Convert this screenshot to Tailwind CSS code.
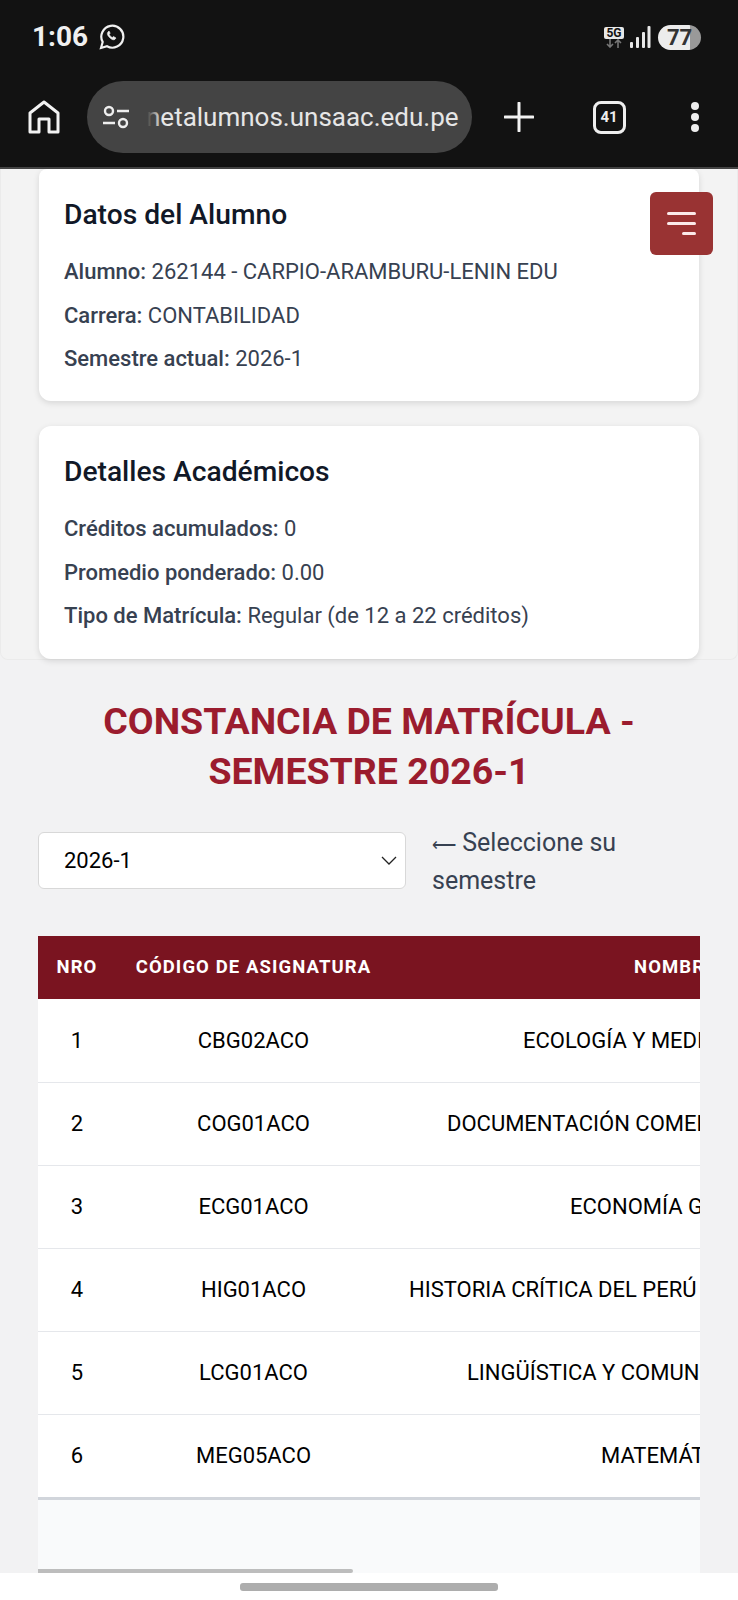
<!DOCTYPE html>
<html lang="es">
<head>
<meta charset="utf-8">
<script src="https://cdn.jsdelivr.net/npm/@tailwindcss/browser@4"></script>
</head>
<body class="font-['Roboto',sans-serif]">
<div class="w-[738px] h-[1600px] overflow-hidden flex flex-col bg-[#f2f2f3]">
  <!-- system + browser chrome -->
  <header class="h-[169px] shrink-0 bg-[#121212] text-white flex flex-col">
    <div class="h-[74px] pt-[20px] px-[32px] flex items-start justify-between">
      <div class="flex items-center gap-[11px] h-[34px]">
        <span class="text-[28px] font-bold text-[#f0f0f0]">1:06</span>
        <svg width="26" height="26" viewBox="0 0 26 26" fill="none" stroke="#f0f0f0" stroke-width="2.2"><path d="M2 24l1.7-6A11 11 0 1 1 8 22.3z"/><path d="M9 8c-1 1-1 3 1.5 5.500s4.500 2.800 5.500 1.800l1-1.300-2.600-1.600-1 1c-1 0-3-2-3.200-3.200l1-1L10 7z" fill="#f0f0f0" stroke-width="0.600"/></svg>
      </div>
      <div class="flex items-center gap-[5px] h-[34px] pr-[5px]">
        <div class="flex flex-col items-center">
          <span class="bg-[#e8e8e8] text-[#121212] rounded-[2px] text-[12px] font-bold leading-[12px] px-[2px]">5G</span>
          <svg width="20" height="9" viewBox="0 0 20 9" fill="none" stroke="#777" stroke-width="1.600"><path d="M6 0v8M3 5l3 3 3-3M14 9V1M11 4l3-3 3 3"/></svg>
        </div>
        <svg width="22" height="23" viewBox="0 0 22 23" fill="#e8e8e8"><rect x="1" y="16" width="3" height="6" rx="1"/><rect x="7" y="11" width="3" height="11" rx="1"/><rect x="13" y="6" width="3" height="16" rx="1"/><rect x="18.500" y="0" width="3" height="22" rx="1"/></svg>
        <div class="w-[43px] h-[25px] rounded-full overflow-hidden flex items-center justify-center bg-[linear-gradient(90deg,#ececec_0%,#ececec_75%,#999_75%,#999_100%)] text-[#333] text-[22px] font-bold ml-[2px]">77</div>
      </div>
    </div>
    <div class="flex items-center h-[72px] mt-[7px]">
      <div class="w-[87px] flex justify-center">
        <svg width="32" height="34" viewBox="0 0 32 34" fill="none" stroke="#f2f2f2" stroke-width="3" stroke-linejoin="round"><path d="M2 32V13L16 2l14 11v19H21V19H11v13z"/></svg>
      </div>
      <div class="relative w-[385px] h-[72px] rounded-full bg-[#444] flex items-center overflow-hidden pl-[15px]">
        <svg width="28" height="24" viewBox="0 0 28 24" fill="none" stroke="#eee" stroke-width="2.400"><circle cx="7" cy="6" r="4"/><path d="M15 6h12M1 18h12"/><circle cx="21" cy="18" r="4"/></svg>
        <span class="ml-[16px] text-[26px] text-[#e6e6e6] whitespace-nowrap">netalumnos.unsaac.edu.pe</span>
        <div class="absolute left-[58px] top-0 w-[16px] h-full bg-[linear-gradient(90deg,#444_15%,rgba(68,68,68,0)_100%)]"></div>
      </div>
      <div class="w-[94px] flex justify-center">
        <svg width="30" height="30" viewBox="0 0 30 30" stroke="#f2f2f2" stroke-width="3" stroke-linecap="round"><path d="M15 1v28M1 15h28"/></svg>
      </div>
      <div class="w-[86px] flex justify-center">
        <div class="w-[33px] h-[33px] rounded-[8px] border-[3px] border-[#eee] flex items-center justify-center text-[15px] font-bold text-[#eee]">41</div>
      </div>
      <div class="flex-1 flex flex-col items-center gap-[3px]">
        <span class="w-[8px] h-[8px] rounded-full bg-[#eee]"></span>
        <span class="w-[8px] h-[8px] rounded-full bg-[#eee]"></span>
        <span class="w-[8px] h-[8px] rounded-full bg-[#eee]"></span>
      </div>
    </div>
    <div class="mt-auto h-[2px] bg-[#444]"></div>
  </header>

  <main class="relative flex-1 min-h-0 flex flex-col">
    <button class="absolute left-[650px] top-[23px] w-[63px] h-[63px] rounded-[6px] bg-[#993333] flex flex-col items-end justify-center gap-[7px] pr-[17px]">
      <span class="w-[29px] h-[3px] rounded-full bg-[#fbeaea]"></span>
      <span class="w-[29px] h-[3px] rounded-full bg-[#fbeaea]"></span>
      <span class="w-[14px] h-[3px] rounded-full bg-[#fbeaea]"></span>
    </button>

    <section class="h-[491px] shrink-0 border border-t-0 border-[#ebebeb] rounded-b-[8px] px-[38px] flex flex-col gap-[25px] bg-[#f3f3f3]">
      <div class="h-[232px] bg-white rounded-b-[12px] rounded-t-[8px] shadow-[0_2px_6px_rgba(0,0,0,0.12)] px-[25px] pt-[29px] text-[22px] text-[#374151]">
        <h2 class="text-[28.2px] leading-[34px] font-medium text-[#111827] mb-[18px]">Datos del Alumno</h2>
        <p class="leading-[43.5px]"><b class="font-medium">Alumno:</b> 262144 - CARPIO-ARAMBURU-LENIN EDU</p>
        <p class="leading-[43.5px]"><b class="font-medium">Carrera:</b> CONTABILIDAD</p>
        <p class="leading-[43.5px]"><b class="font-medium">Semestre actual:</b> 2026-1</p>
      </div>
      <div class="h-[233px] bg-white rounded-[12px] shadow-[0_2px_6px_rgba(0,0,0,0.12)] px-[25px] pt-[29px] text-[22px] text-[#374151]">
        <h2 class="text-[28.2px] leading-[34px] font-medium text-[#111827] mb-[18px]">Detalles Académicos</h2>
        <p class="leading-[43.5px]"><b class="font-medium">Créditos acumulados:</b> 0</p>
        <p class="leading-[43.5px]"><b class="font-medium">Promedio ponderado:</b> 0.00</p>
        <p class="leading-[43.5px]"><b class="font-medium">Tipo de Matrícula:</b> Regular (de 12 a 22 créditos)</p>
      </div>
    </section>

    <h1 class="mt-[36px] text-center text-[37.5px] leading-[50px] font-bold text-[#9b1c2e]">CONSTANCIA DE MATRÍCULA -<br>SEMESTRE 2026-1</h1>

    <div class="mt-[36px] flex pl-[38px] gap-[26px]">
      <div class="w-[368px] h-[57px] bg-white border border-[#d8d8d8] rounded-[6px] flex items-center justify-between pl-[25px] pr-[8px] text-[22px] text-black">
        <span>2026-1</span>
        <svg width="16" height="10" viewBox="0 0 16 10" fill="none" stroke="#222" stroke-width="1.300"><path d="M1 1l7 7 7-7"/></svg>
      </div>
      <p class="w-[250px] text-[25px] leading-[36px] text-[#374151] -mt-[7px]"><span class="text-[17px]">⟵</span> Seleccione su semestre</p>
    </div>

    <div class="ml-[38px] w-[662px] mt-[37px] flex-1 min-h-0 bg-[#f9fafb] overflow-hidden flex flex-col">
      <table class="w-[1391px] table-fixed border-collapse text-[22px] text-black bg-white">
        <colgroup><col class="w-[78px]"><col class="w-[275px]"><col></colgroup>
        <thead>
          <tr class="h-[63px] bg-[#7a1420] text-white text-[18.5px] font-bold tracking-[1.1px]">
            <th class="text-center font-bold">NRO</th>
            <th class="text-center font-bold">CÓDIGO DE ASIGNATURA</th>
            <th class="text-left font-bold pl-[243px]">NOMBRE DE ASIGNATURA</th>
          </tr>
        </thead>
        <tbody>
          <tr class="h-[83px] border-b border-[#e5e7eb]"><td class="text-center">1</td><td class="text-center">CBG02ACO</td><td class="pl-[132px] whitespace-nowrap">ECOLOGÍA Y MEDIO AMBIENTE</td></tr>
          <tr class="h-[83px] border-b border-[#e5e7eb]"><td class="text-center">2</td><td class="text-center">COG01ACO</td><td class="pl-[56px] whitespace-nowrap">DOCUMENTACIÓN COMERCIAL</td></tr>
          <tr class="h-[83px] border-b border-[#e5e7eb]"><td class="text-center">3</td><td class="text-center">ECG01ACO</td><td class="pl-[179px] whitespace-nowrap">ECONOMÍA GENERAL</td></tr>
          <tr class="h-[83px] border-b border-[#e5e7eb]"><td class="text-center">4</td><td class="text-center">HIG01ACO</td><td class="pl-[18px] whitespace-nowrap">HISTORIA CRÍTICA DEL PERÚ</td></tr>
          <tr class="h-[83px] border-b border-[#e5e7eb]"><td class="text-center">5</td><td class="text-center">LCG01ACO</td><td class="pl-[76px] whitespace-nowrap">LINGÜÍSTICA Y COMUNICACIÓN</td></tr>
          <tr class="h-[84px] border-b-[3px] border-[#d1d5db]"><td class="text-center">6</td><td class="text-center">MEG05ACO</td><td class="pl-[210px] whitespace-nowrap">MATEMÁTICA</td></tr>
        </tbody>
      </table>
      <div class="mt-auto w-[315px] h-[4px] rounded-r-[2px] bg-[#bdbdbd]"></div>
    </div>

    <div class="h-[27px] shrink-0 bg-white flex justify-center pt-[10px]">
      <div class="w-[258px] h-[8px] rounded-[3px] bg-[#adadad]"></div>
    </div>
  </main>
</div>
</body>
</html>
